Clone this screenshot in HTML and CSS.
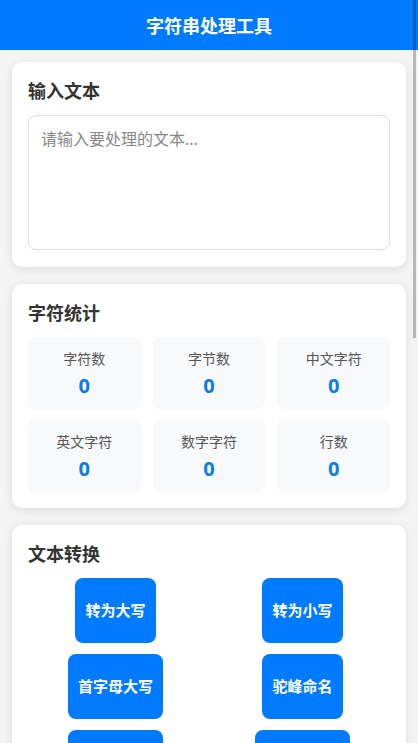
FILE: index.html
```html
<!DOCTYPE html>
<html lang="zh-CN">
<head>
<meta charset="utf-8">
<meta name="viewport" content="width=device-width, initial-scale=1">
<title>字符串处理工具</title>
<link rel="stylesheet" href="styles.css">
</head>
<body>
<header class="app-header">
  <h1 class="app-title">字符串处理工具</h1>
</header>
<main class="container">
  <section class="card">
    <h2 class="card-title">输入文本</h2>
    <textarea class="text-input" placeholder="请输入要处理的文本..."></textarea>
  </section>

  <section class="card">
    <h2 class="card-title">字符统计</h2>
    <div class="stats-grid">
      <div class="stat"><div class="stat-label">字符数</div><div class="stat-value">0</div></div>
      <div class="stat"><div class="stat-label">字节数</div><div class="stat-value">0</div></div>
      <div class="stat"><div class="stat-label">中文字符</div><div class="stat-value">0</div></div>
      <div class="stat"><div class="stat-label">英文字符</div><div class="stat-value">0</div></div>
      <div class="stat"><div class="stat-label">数字字符</div><div class="stat-value">0</div></div>
      <div class="stat"><div class="stat-label">行数</div><div class="stat-value">0</div></div>
    </div>
  </section>

  <section class="card">
    <h2 class="card-title">文本转换</h2>
    <div class="btn-grid">
      <button class="btn">转为大写</button>
      <button class="btn">转为小写</button>
      <button class="btn">首字母大写</button>
      <button class="btn">驼峰命名</button>
      <button class="btn">下划线命名</button>
      <button class="btn">中划线命名</button>
      <button class="btn">反转文本</button>
      <button class="btn">去除空格</button>
    </div>
  </section>

  <section class="card">
    <h2 class="card-title">编码转换</h2>
    <div class="btn-grid">
      <button class="btn">Base64编码</button>
      <button class="btn">Base64解码</button>
      <button class="btn">URL编码</button>
      <button class="btn">URL解码</button>
    </div>
  </section>

  <section class="card">
    <h2 class="card-title">处理结果</h2>
    <textarea class="text-input" readonly placeholder="处理结果将显示在这里..."></textarea>
  </section>
</main>
<div class="scroll-thumb"></div>
</body>
</html>
```

FILE: styles.css
```css
* {
  box-sizing: border-box;
}

html, body {
  margin: 0;
  padding: 0;
}

body {
  background: #f4f4f4;
  font-family: "Noto Sans", "Noto Sans CJK SC", sans-serif;
  color: #333;
}

.app-header {
  background: #007bff;
  height: 50px;
  display: flex;
  align-items: center;
  justify-content: center;
}

.app-title {
  margin: 0;
  color: #fff;
  font-size: 18px;
  font-weight: 700;
  line-height: 1;
  padding-top: 2px;
}

.container {
  padding: 12px 12px 20px;
}

.card {
  background: #fff;
  border-radius: 10px;
  box-shadow: 0 2px 10px rgba(0, 0, 0, 0.1);
  padding: 16px;
  margin-bottom: 17px;
}

.card-title {
  margin: 0 0 10px;
  font-size: 18px;
  font-weight: 700;
  line-height: 27px;
  color: #333;
}

.text-input {
  display: block;
  width: 100%;
  height: 135px;
  margin-bottom: 1px;
  border: 1px solid #ddd;
  border-radius: 8px;
  padding: 12px;
  font-family: "Noto Sans", "Noto Sans CJK SC", sans-serif;
  font-size: 16px;
  line-height: 22px;
  color: #333;
  resize: none;
  outline: none;
}

.text-input::placeholder {
  color: #888;
}

.stats-grid {
  display: grid;
  grid-template-columns: repeat(3, 1fr);
  gap: 11px 12px;
}

.stat {
  background: #f8f9fa;
  border-radius: 8px;
  padding: 12px 6px;
  text-align: center;
}

.stat-label {
  font-size: 14px;
  line-height: 20px;
  color: #555;
}

.stat-value {
  margin-top: 5px;
  font-size: 20px;
  line-height: 23px;
  font-weight: 700;
  color: #0a7de6;
}

.btn-grid {
  display: grid;
  grid-template-columns: 1fr 1fr;
  gap: 11px 12px;
  justify-items: center;
}

.btn {
  background: #007bff;
  color: #fff;
  border: none;
  border-radius: 8px;
  padding: 22px 10px;
  font-family: "Noto Sans", "Noto Sans CJK SC", sans-serif;
  font-size: 15px;
  font-weight: 700;
  line-height: 21px;
  cursor: pointer;
}

.scroll-thumb {
  position: fixed;
  top: 0;
  right: 2px;
  width: 3px;
  height: 338px;
  background: rgba(0, 0, 0, 0.25);
}
```
